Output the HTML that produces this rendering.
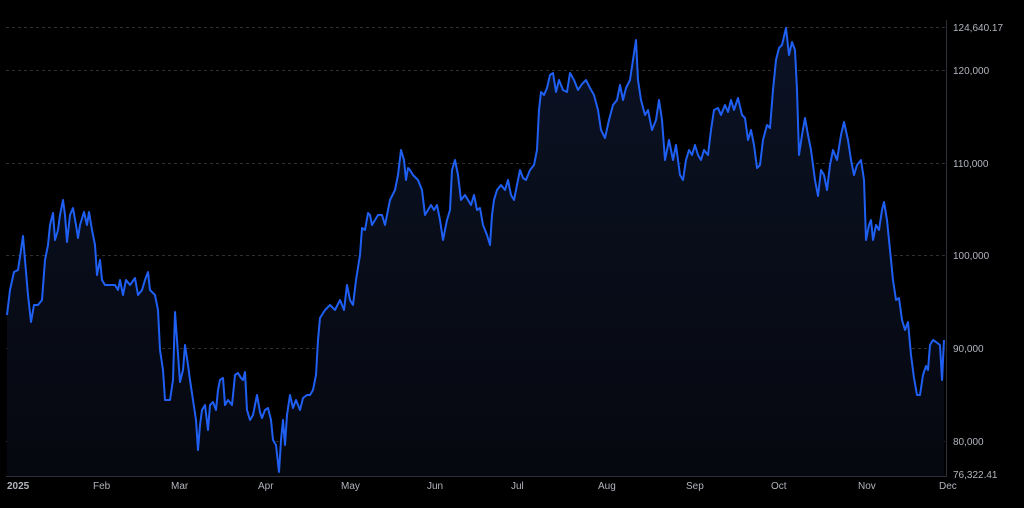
<!DOCTYPE html>
<html><head><meta charset="utf-8"><style>
html,body{margin:0;padding:0;background:#000;width:1024px;height:508px;overflow:hidden}
svg{display:block}
text{font-family:"Liberation Sans",sans-serif;font-size:10px;fill:#b2b5be}
</style></head><body>
<svg width="1024" height="508" viewBox="0 0 1024 508">
<defs><linearGradient id="g" x1="0" y1="0" x2="0" y2="1"><stop offset="0" stop-color="#0b1224"/><stop offset="1" stop-color="#06080f"/></linearGradient></defs>
<g stroke="#2e3038" stroke-dasharray="3,3" stroke-width="1">
<line x1="6" y1="27.5" x2="946" y2="27.5"/>
<line x1="6" y1="70.5" x2="946" y2="70.5"/>
<line x1="6" y1="163.5" x2="946" y2="163.5"/>
<line x1="6" y1="255.5" x2="946" y2="255.5"/>
<line x1="6" y1="348.5" x2="946" y2="348.5"/>
<line x1="6" y1="441.5" x2="946" y2="441.5"/>
</g>
<path id="p" fill="url(#g)" d="M7,315 L10,290 14,272 18,270 21,250 23,236 25,260 28,295 31,322 34,305 38,305 42,300 45,260 48,245 50,225 53,213 55,240 58,230 60,215 63,200 65,215 67,242 70,215 73,208 76,225 78,238 80,225 84,212 87,225 89,212 92,230 95,245 97,275 100,260 102,280 105,285 110,285 115,285 118,290 120,280 123,295 126,280 130,285 135,278 138,295 142,290 145,280 148,272 150,290 155,295 158,310 160,350 163,370 165,400 170,400 173,380 175,312 177,340 180,382 183,370 185,345 188,365 190,380 193,400 196,420 198,450 200,425 202,410 205,405 208,430 210,405 213,402 216,410 218,390 220,380 223,378 225,405 228,400 232,405 235,375 238,373 241,378 243,380 245,372 247,410 250,420 253,415 257,395 260,412 262,418 265,410 268,408 271,420 273,440 276,445 279,472 281,440 283,420 285,445 287,415 290,395 293,408 296,400 300,410 303,398 307,395 310,395 313,390 316,375 318,340 320,318 325,310 330,305 335,310 340,300 344,310 347,285 350,300 353,305 356,280 360,255 362,228 365,230 368,213 370,215 372,225 375,220 378,215 382,215 385,225 390,200 395,190 398,175 401,150 404,160 406,180 408,168 410,170 413,175 418,180 422,190 425,215 428,210 431,205 434,210 437,205 440,220 443,240 447,220 450,210 452,170 455,160 458,175 461,200 465,195 468,200 471,205 474,195 477,210 480,208 483,225 487,235 490,245 492,215 494,200 497,190 501,185 505,190 508,180 511,195 514,200 517,185 520,170 523,178 526,180 530,170 534,165 537,150 539,110 541,92 544,95 547,88 550,75 553,73 556,92 559,80 563,90 567,92 570,73 574,80 578,90 582,84 586,80 590,88 594,95 598,110 601,130 605,138 609,120 613,105 617,100 620,85 623,100 626,88 630,80 633,60 636,40 638,80 641,100 645,115 648,110 652,130 656,120 659,100 662,120 665,160 669,140 673,160 676,145 680,175 683,180 686,160 689,150 692,155 695,145 698,155 701,160 704,150 708,155 711,130 714,110 718,108 721,115 725,105 728,112 731,100 734,110 738,98 742,115 745,118 748,140 751,130 754,145 757,168 760,165 763,140 767,125 770,128 773,90 776,60 779,48 782,45 786,28 789,55 792,42 795,50 797,90 799,155 802,135 805,118 808,135 811,150 815,180 818,196 821,170 824,175 827,190 830,165 833,150 837,160 841,135 844,122 848,140 851,160 854,175 857,165 861,160 864,180 866,240 869,225 871,220 873,240 876,225 879,230 882,210 884,202 887,220 890,250 893,280 896,300 899,298 902,320 905,330 908,322 911,355 914,378 917,395 920,395 923,375 926,366 928,370 930,345 933,340 936,342 940,345 942,380 944,340 L944,476 L7,476 Z"/>
<polyline fill="none" stroke="#1f5ff2" stroke-width="2" stroke-linejoin="round" points="7,315 10,290 14,272 18,270 21,250 23,236 25,260 28,295 31,322 34,305 38,305 42,300 45,260 48,245 50,225 53,213 55,240 58,230 60,215 63,200 65,215 67,242 70,215 73,208 76,225 78,238 80,225 84,212 87,225 89,212 92,230 95,245 97,275 100,260 102,280 105,285 110,285 115,285 118,290 120,280 123,295 126,280 130,285 135,278 138,295 142,290 145,280 148,272 150,290 155,295 158,310 160,350 163,370 165,400 170,400 173,380 175,312 177,340 180,382 183,370 185,345 188,365 190,380 193,400 196,420 198,450 200,425 202,410 205,405 208,430 210,405 213,402 216,410 218,390 220,380 223,378 225,405 228,400 232,405 235,375 238,373 241,378 243,380 245,372 247,410 250,420 253,415 257,395 260,412 262,418 265,410 268,408 271,420 273,440 276,445 279,472 281,440 283,420 285,445 287,415 290,395 293,408 296,400 300,410 303,398 307,395 310,395 313,390 316,375 318,340 320,318 325,310 330,305 335,310 340,300 344,310 347,285 350,300 353,305 356,280 360,255 362,228 365,230 368,213 370,215 372,225 375,220 378,215 382,215 385,225 390,200 395,190 398,175 401,150 404,160 406,180 408,168 410,170 413,175 418,180 422,190 425,215 428,210 431,205 434,210 437,205 440,220 443,240 447,220 450,210 452,170 455,160 458,175 461,200 465,195 468,200 471,205 474,195 477,210 480,208 483,225 487,235 490,245 492,215 494,200 497,190 501,185 505,190 508,180 511,195 514,200 517,185 520,170 523,178 526,180 530,170 534,165 537,150 539,110 541,92 544,95 547,88 550,75 553,73 556,92 559,80 563,90 567,92 570,73 574,80 578,90 582,84 586,80 590,88 594,95 598,110 601,130 605,138 609,120 613,105 617,100 620,85 623,100 626,88 630,80 633,60 636,40 638,80 641,100 645,115 648,110 652,130 656,120 659,100 662,120 665,160 669,140 673,160 676,145 680,175 683,180 686,160 689,150 692,155 695,145 698,155 701,160 704,150 708,155 711,130 714,110 718,108 721,115 725,105 728,112 731,100 734,110 738,98 742,115 745,118 748,140 751,130 754,145 757,168 760,165 763,140 767,125 770,128 773,90 776,60 779,48 782,45 786,28 789,55 792,42 795,50 797,90 799,155 802,135 805,118 808,135 811,150 815,180 818,196 821,170 824,175 827,190 830,165 833,150 837,160 841,135 844,122 848,140 851,160 854,175 857,165 861,160 864,180 866,240 869,225 871,220 873,240 876,225 879,230 882,210 884,202 887,220 890,250 893,280 896,300 899,298 902,320 905,330 908,322 911,355 914,378 917,395 920,395 923,375 926,366 928,370 930,345 933,340 936,342 940,345 942,380 944,340"/>
<line x1="946.5" y1="20" x2="946.5" y2="477" stroke="#2e3038"/>
<line x1="6" y1="476.5" x2="947" y2="476.5" stroke="#2e3038"/>
<text x="953" y="31">124,640.17</text>
<text x="953" y="74">120,000</text>
<text x="953" y="167">110,000</text>
<text x="953" y="259">100,000</text>
<text x="953" y="352">90,000</text>
<text x="953" y="445">80,000</text>
<text x="953" y="478">76,322.41</text>
<text x="7" y="489" style="font-weight:bold">2025</text>
<text x="93" y="489">Feb</text>
<text x="171" y="489">Mar</text>
<text x="258" y="489">Apr</text>
<text x="341" y="489">May</text>
<text x="427" y="489">Jun</text>
<text x="511" y="489">Jul</text>
<text x="598" y="489">Aug</text>
<text x="686" y="489">Sep</text>
<text x="771" y="489">Oct</text>
<text x="858" y="489">Nov</text>
<text x="939" y="489">Dec</text>
</svg>
</body></html>
